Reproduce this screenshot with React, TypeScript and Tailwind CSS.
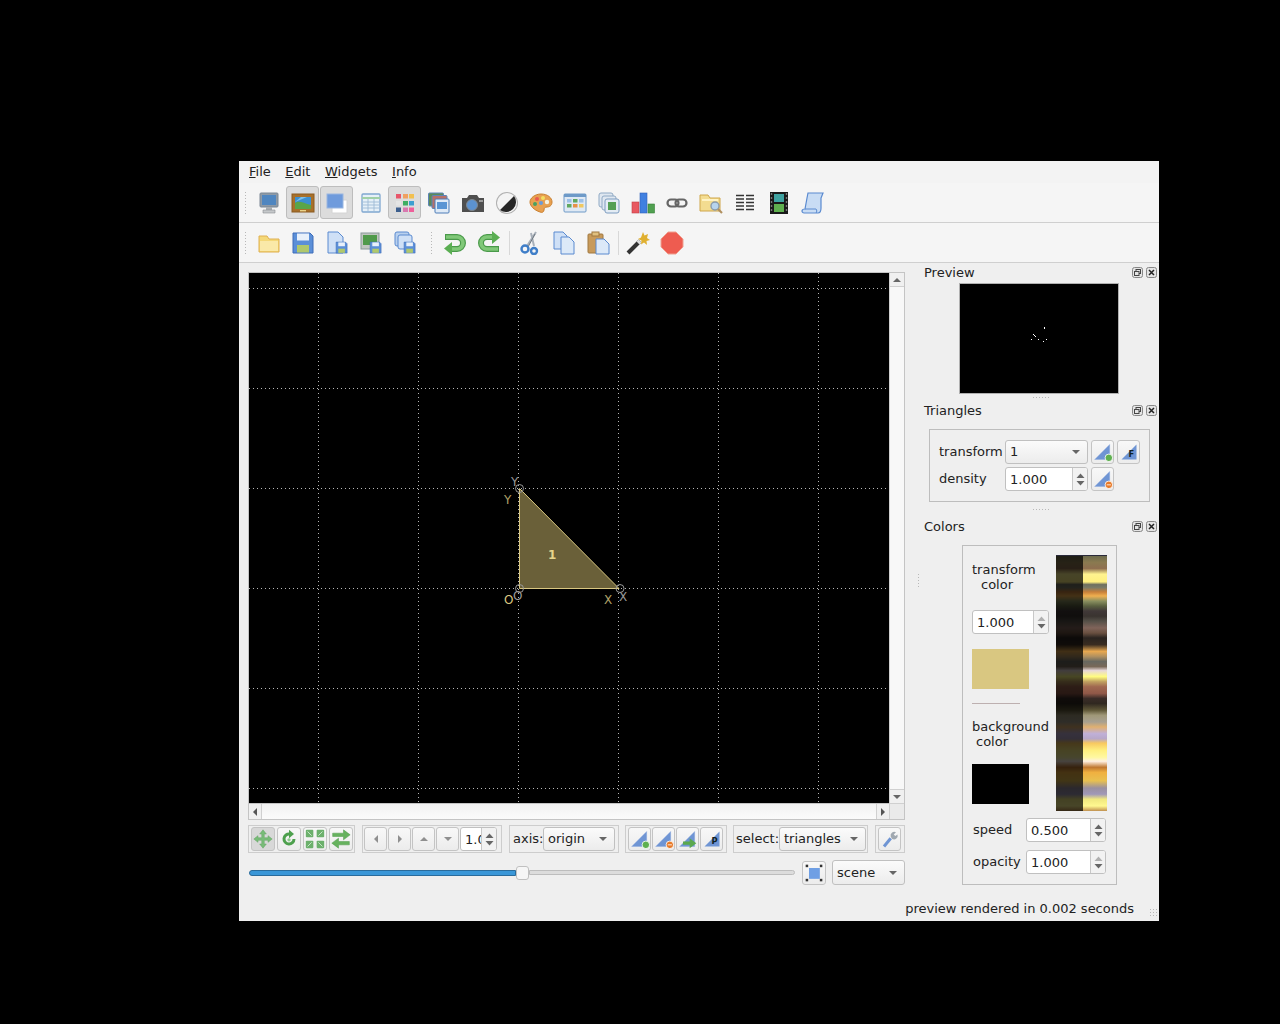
import React from "react";

type P = { children: React.ReactNode };
const Ic = ({ children, s = 24 }: P & { s?: number }) => (
  <svg width={s} height={s} viewBox="0 0 24 24" className="block shrink-0">{children}</svg>
);

const Monitor = () => <Ic><rect x="3" y="2" width="18" height="14" rx="1" fill="#8e9aa6" stroke="#7b8794" /><rect x="5" y="4" width="14" height="10" fill="#4f86c0" /><path d="M9 16h6v3H9z" fill="#a9aeb2" /><path d="M6 19h12v3H6z" fill="#c5c8ca" stroke="#8a8e92" strokeWidth=".6" /></Ic>;
const Pic = () => <Ic><rect x="1" y="3" width="22" height="18" fill="#a8702a" stroke="#8a5a20" /><rect x="4" y="6" width="16" height="12" fill="#3c8fd0" /><path d="M4 18v-6c4-3 8 0 16 2v4z" fill="#5aa548" /><path d="M4 11l6-5h6z" fill="#7ec0e8" /><rect x="9" y="19" width="6" height="1.4" fill="#e9d38a" /></Ic>;
const Shadow = () => <Ic><path d="M7 9h15v13H7z" fill="#fff" stroke="#d4d4d4" /><rect x="2" y="3" width="16" height="14" fill="#6f9bdc" stroke="#9ab6e0" /></Ic>;
const Table = () => <Ic><rect x="3" y="3" width="18" height="18" rx="1" fill="#e6f0f8" stroke="#7fa6cf" strokeWidth="1.3" /><path d="M3 7h18" stroke="#a0d0a8" strokeWidth="2" /><path d="M4 11h16M4 14h16M4 17h16M9 8v12M15 8v12" stroke="#9dbad6" strokeWidth=".9" /></Ic>;
const Colors = () => <Ic><rect x="3" y="3" width="5" height="4.5" fill="#e8566a" /><rect x="10" y="3" width="5" height="4.5" fill="#f0a060" /><rect x="16" y="3" width="5" height="4.5" fill="#f2c050" /><rect x="3" y="10" width="5" height="4.5" fill="#e4e4e4" /><rect x="10" y="10" width="5" height="4.5" fill="#3cae62" /><rect x="16" y="10" width="5" height="4.5" fill="#3a9fd0" /><rect x="3" y="16.5" width="5" height="4.5" fill="#3d5f8e" /><rect x="10" y="16.5" width="5" height="4.5" fill="#d878b0" /><rect x="16" y="16.5" width="5" height="4.5" fill="#ee5f9a" /></Ic>;
const Layers = () => <Ic><rect x="1.5" y="2" width="15" height="13" rx="1" fill="#5b8a58" stroke="#5c84b8" /><rect x="5" y="4.5" width="15" height="13" rx="1" fill="#b87068" stroke="#5c84b8" /><rect x="8" y="8" width="14" height="14" rx="1" fill="#dfeaf6" stroke="#4d7cb8" /><rect x="10" y="11" width="10" height="7" fill="#5a95d4" /></Ic>;
const Camera = () => <Ic><path d="M1 7h5l2-3h8l2 3h5v14H1z" fill="#4f4f4f" /><circle cx="11" cy="14" r="5.5" fill="#5c92d0" stroke="#80878e" /><rect x="18" y="9" width="4" height="2" fill="#9a9a9a" /></Ic>;
const Contrast = () => <Ic><circle cx="12" cy="12" r="11" fill="#b0b0b0" /><circle cx="12" cy="12" r="10" fill="#f4f4f4" /><path d="M19 5a10 10 0 0 1-14 14z" fill="#262626" /></Ic>;
const Palette = () => <Ic><path d="M12 3c7 0 11 4 11 8s-3 5-5 5-3 1-3 3-2 3-4 2C5 19 1 15 1 11s5-8 11-8z" fill="#e8a050" stroke="#c98030" /><circle cx="8" cy="8" r="2" fill="#e85a50" /><circle cx="14" cy="7" r="2" fill="#f2de60" /><circle cx="6" cy="13" r="2" fill="#4aa060" /><circle cx="18" cy="11" r="2.2" fill="#f4f0e0" /><circle cx="12" cy="12" r="2" fill="#6a9ad8" /></Ic>;
const Grid2 = () => <Ic><rect x="1" y="3" width="22" height="18" rx="1" fill="#dfe9f4" stroke="#6e9ac8" /><rect x="1" y="3" width="22" height="3" fill="#6e9ac8" /><rect x="4" y="8" width="4.5" height="3.5" fill="#9cc0e8" /><rect x="10" y="8" width="4.5" height="3.5" fill="#60a860" /><rect x="16" y="8" width="4.5" height="3.5" fill="#9cc0e8" /><rect x="4" y="13" width="4.5" height="3.5" fill="#60a860" /><rect x="10" y="13" width="4.5" height="3.5" fill="#e89048" /><rect x="16" y="13" width="4.5" height="3.5" fill="#f0c860" /></Ic>;
const Stack = () => <Ic><rect x="2" y="2" width="14" height="14" rx="2" fill="#dfe7f0" stroke="#8fa9c4" /><rect x="5" y="5" width="14" height="14" rx="2" fill="#dfe7f0" stroke="#8fa9c4" /><rect x="8" y="8" width="14" height="14" rx="2" fill="#e4ecf4" stroke="#7d9cc0" /><rect x="11" y="11" width="8" height="8" fill="#55a055" /></Ic>;
const Bars = () => <Ic><rect x="1" y="11" width="7" height="11" fill="#e85860" stroke="#c04048" strokeWidth=".6" /><rect x="9" y="2" width="7" height="20" fill="#4080e0" stroke="#3060b8" strokeWidth=".6" /><rect x="17" y="13" width="6.5" height="9" fill="#50a050" stroke="#388038" strokeWidth=".6" /></Ic>;
const Chain = () => <Ic><rect x="2.500" y="8.500" width="11" height="7" rx="3.500" fill="none" stroke="#666" strokeWidth="2.200" /><rect x="10.500" y="8.500" width="11" height="7" rx="3.500" fill="none" stroke="#666" strokeWidth="2.200" /></Ic>;
const FolderFind = () => <Ic><path d="M1 4h8l2 3h10v13H1z" fill="#f3dc90" stroke="#cfa64a" /><path d="M3 9h16" stroke="#fff3c4" strokeWidth="2" /><circle cx="16" cy="15" r="4" fill="#b7d4ee" stroke="#8a9bab" strokeWidth="1.4" /><path d="M19 18l4 4" stroke="#b09060" strokeWidth="2.2" /></Ic>;
const Columns = () => <Ic><path d="M3 4.500h8M3 8h8M3 11.500h8M3 15h8M3 18.500h8M13 4.500h8M13 8h8M13 11.500h8M13 15h8M13 18.500h8" stroke="#333" strokeWidth="1.700" /></Ic>;
const Film = () => <Ic><rect x="3" y="1" width="18" height="22" fill="#1a1a1a" /><rect x="7" y="3" width="10" height="8" fill="#3fa2a0" /><rect x="7" y="13" width="10" height="8" fill="#5fb04f" /><path d="M4.5 2v20M19.5 2v20" stroke="#777" strokeWidth="1.4" strokeDasharray="2 2" /></Ic>;
const Scroll = () => <Ic><path d="M7 2h15l-2 5v10c0 3-1 5-3 5H3c-1 0-2-1-2-2s1-2 3-2l2-11z" fill="#c8dcf4" stroke="#5a8ad0" strokeWidth="1.2" /><path d="M4 18h11c1 1 1 3 0 4" fill="none" stroke="#5a8ad0" /></Ic>;

const Folder = () => <Ic><path d="M2 5h8l2 3h10v13H2z" fill="#f4d878" stroke="#dfb050" /><path d="M3 10h18v10H3z" fill="#fae9a8" /></Ic>;
const Floppy = () => <><path d="M2 2h17l3 3v17H2z" fill="#5b8fd8" stroke="#3f6db8" /><rect x="6" y="2.5" width="12" height="7" fill="#e8f0fa" /><rect x="6" y="14" width="12" height="7.5" fill="#b0c86c" /></>;
const Save = () => <Ic><Floppy /></Ic>;
const SmallFloppy = () => <g transform="translate(10 10) scale(.55)"><Floppy /></g>;
const SaveDoc = () => <Ic><path d="M3 1h10l5 5v16H3z" fill="#cfe0f6" stroke="#5a8ad0" /><SmallFloppy /></Ic>;
const SaveImg = () => <Ic><rect x="2" y="2" width="18" height="16" fill="#c0c6c0" stroke="#8a9a9a" /><rect x="4" y="4" width="14" height="10" fill="#4f9a4a" /><SmallFloppy /></Ic>;
const SaveAll = () => <Ic><rect x="2" y="1" width="14" height="14" rx="2" fill="#b8d0ee" stroke="#5a8ad0" /><rect x="5" y="4" width="14" height="14" rx="2" fill="#cfe0f6" stroke="#5a8ad0" /><SmallFloppy /></Ic>;
const Undo = () => <Ic><path d="M2 6h12a6 6 0 0 1 0 12H8" fill="none" stroke="#4a9a4a" strokeWidth="6" /><path d="M3 6h11a6 6 0 0 1 0 12H8" fill="none" stroke="#80c878" strokeWidth="3.600" /><path d="M9 11v13l-8-6.500z" fill="#5aae52" /></Ic>;
const Redo = () => <Ic><path d="M22 18H10a6 6 0 0 1 0-12h6" fill="none" stroke="#4a9a4a" strokeWidth="6" /><path d="M21 18H10a6 6 0 0 1 0-12h6" fill="none" stroke="#80c878" strokeWidth="3.600" /><path d="M15 0v13l8-6.500z" fill="#5aae52" /></Ic>;
const Cut = () => <Ic><path d="M18 1L9 15M13 2l3 13" stroke="#a9b1ba" strokeWidth="2" /><path d="M17 3l-7 13" stroke="#6d7780" strokeWidth="1" /><circle cx="7" cy="18" r="3.5" fill="none" stroke="#3f7ec8" strokeWidth="2.4" /><circle cx="16" cy="20" r="3" fill="none" stroke="#3f7ec8" strokeWidth="2.4" /></Ic>;
const Copy = () => <Ic><path d="M2 1h9l4 4v13H2z" fill="#cfe0f6" stroke="#5a8ad0" /><path d="M9 6h8l5 5v12H9z" fill="#dce9f8" stroke="#5a8ad0" /></Ic>;
const Paste = () => <Ic><rect x="2" y="3" width="15" height="19" rx="1" fill="#c89a5a" stroke="#a07840" /><rect x="6" y="1" width="7" height="4" fill="#e0c080" stroke="#a07840" /><path d="M10 8h8l5 5v10H10z" fill="#dce9f8" stroke="#5a8ad0" /></Ic>;
const Wand = () => <Ic><path d="M2 22L14 10" stroke="#333" strokeWidth="4" /><path d="M12 12l2-2" stroke="#ddd" strokeWidth="4" /><path d="M17 1l1.5 3.5L22 3l-1 4 3 2-3.5 1 .5 4-3-2.5-3 2 .5-4L12 8l3-1.5z" fill="#e0b030" /></Ic>;
const Stop = () => <Ic><path d="M8 1h8l7 7v8l-7 7H8l-7-7V8z" fill="#ee5c50" stroke="#f0a090" /></Ic>;

const Move = () => <Ic s={20}><path d="M12 1l4 5h-2.500v4.500H18V8l5 4-5 4v-2.500h-4.500V18H16l-4 5-4-5h2.500v-4.500H6V16l-5-4 5-4v2.500h4.500V6H8z" fill="#78bc78" stroke="#62a462" strokeWidth=".6" /></Ic>;
const Rotate = () => <Ic s={20}><path d="M18 12a6 6 0 1 1-5-6" fill="none" stroke="#4da04d" strokeWidth="3.600" /><path d="M12 1v10l6-5z" fill="#4da04d" /><circle cx="12" cy="13" r="2" fill="#8fcc8f" /></Ic>;
const Four = () => <Ic s={20}><rect x="1" y="1" width="9" height="9" rx="1" fill="#6cb06c" /><rect x="14" y="1" width="9" height="9" rx="1" fill="#6cb06c" /><rect x="1" y="14" width="9" height="9" rx="1" fill="#6cb06c" /><rect x="14" y="14" width="9" height="9" rx="1" fill="#6cb06c" /><path d="M3 3l5 5M21 3l-5 5M3 21l5-5M21 21l-5-5" stroke="#c6e6c6" strokeWidth="1.200" /></Ic>;
const Swap = () => <Ic s={20}><path d="M2 5h13V1l8 6-8 6V9H2z" fill="#66b25e" stroke="#4f9a4a" strokeWidth=".6" /><path d="M22 15H9v-4l-8 6 8 6v-4h13z" fill="#66b25e" stroke="#4f9a4a" strokeWidth=".6" /></Ic>;
const Tri = ({ d, f = "#8f8f8f" }: { d: string; f?: string }) => <svg width="10" height="10" viewBox="0 0 10 10" className="block"><path d={d} fill={f} /></svg>;

const TriBase = () => <path d="M2 21L20 3v18z" fill="#6f95d4" stroke="#8aa8dc" strokeWidth=".5" />;
const TriAdd = () => <Ic s={20}><TriBase /><circle cx="19" cy="19" r="4.500" fill="#5fb050" stroke="#fff" /></Ic>;
const TriDel = () => <Ic s={20}><TriBase /><circle cx="19" cy="19" r="4.500" fill="#e87a28" stroke="#fff" /><path d="M16.500 19h5" stroke="#fff" /></Ic>;
const TriArrow = () => <Ic s={20}><TriBase /><path d="M6 15h8v-4l8 6-8 6v-4H6z" fill="#5aa84e" /></Ic>;
const TriF = ({ t }: { t: string }) => <Ic s={20}><path d="M3 21L21 3v18z" fill="#6f95d4" /><text x="11.500" y="18" fontSize="10" fontWeight="700" fill="#122" fontFamily="DejaVu Sans">{t}</text></Ic>;
const Wrench = () => <Ic s={18}><path d="M4 22l9-11" stroke="#6f95d4" strokeWidth="4" /><path d="M13 9a5 5 0 0 1 7-6l-3 3 2 2 3-2a5 5 0 0 1-7 6z" fill="#a0a8b0" /></Ic>;
const Fit = () => <Ic s={20}><rect x="6" y="6" width="13" height="13" fill="#6f9fe4" /><rect x="2" y="2" width="3" height="3" fill="#333" /><rect x="19" y="2" width="3" height="3" fill="#333" /><rect x="2" y="19" width="3" height="3" fill="#333" /><rect x="19" y="19" width="3" height="3" fill="#333" /></Ic>;

const TB = ({ on, children }: P & { on?: boolean }) => (
  <div className={"w-[33px] h-[33px] mr-px flex items-center justify-center rounded-[3px] border " + (on ? "bg-[#dcdcdc] border-[#bdbdbd]" : "border-transparent")}>{children}</div>
);
const Handle = ({ cls }: { cls: string }) => (
  <div className={"bg-[radial-gradient(#b8b8b8_0.7px,transparent_0.8px)] bg-[length:3px_3px] " + cls} />
);
const Sep = ({ cls }: { cls: string }) => <div className={"w-px h-[24px] bg-[#d8d8d8] " + cls} />;

const Btn = ({ children, on, w = "w-[23px]" }: P & { on?: boolean; w?: string }) => (
  <div className={w + " h-[24px] shrink-0 flex items-center justify-center rounded-[3px] border border-[#c4c4c4] " + (on ? "bg-[#d8d8d8]" : "bg-gradient-to-b from-[#f8f8f8] to-[#ececec]")}>{children}</div>
);
const Caret = () => <svg width="10" height="6" viewBox="0 0 10 6" className="block shrink-0"><path d="M1 1h8L5 5z" fill="#666" /></svg>;
const Combo = ({ t, cls }: { t: string; cls: string }) => (
  <div className={"h-[24px] shrink-0 flex items-center justify-between pl-[4px] pr-[6px] rounded-[3px] border border-[#c0c0c0] bg-gradient-to-b from-[#fbfbfb] to-[#ececec] " + cls}>
    <span>{t}</span><Caret />
  </div>
);
const Spin = ({ t, cls, upDim }: { t: string; cls: string; upDim?: boolean }) => (
  <div className={"h-[24px] shrink-0 flex rounded-[3px] border border-[#c0c0c0] bg-white overflow-hidden " + cls}>
    <div className="flex-1 min-w-0 overflow-hidden pl-[4px] leading-[24px]">{t}</div>
    <div className="w-[15px] shrink-0 border-l border-[#c8c8c8] bg-[#f2f2f2] flex flex-col items-center justify-center gap-[3px]">
      <svg width="9" height="5" viewBox="0 0 9 5" className="block"><path d="M0.500 5L4.500 0.500 8.500 5z" fill={upDim ? "#b0b0b0" : "#666"} /></svg>
      <svg width="9" height="5" viewBox="0 0 9 5" className="block"><path d="M0.500 0L4.500 4.500 8.500 0z" fill="#666" /></svg>
    </div>
  </div>
);
const Group = ({ children, cls }: P & { cls: string }) => (
  <div className={"h-[28px] shrink-0 flex items-center border border-[#cdcdcd] " + cls}>{children}</div>
);

const DockBtns = () => (
  <div className="flex gap-[3px] mr-[2px]">
    <svg width="11" height="11" viewBox="0 0 11 11" className="block"><rect x=".5" y=".5" width="10" height="10" rx="2" fill="#e4e4e4" stroke="#888" /><rect x="4" y="2.500" width="4.500" height="4" fill="none" stroke="#444" /><rect x="2.500" y="4.500" width="4.500" height="4" fill="#e4e4e4" stroke="#444" /></svg>
    <svg width="11" height="11" viewBox="0 0 11 11" className="block"><rect x=".5" y=".5" width="10" height="10" rx="2" fill="#e4e4e4" stroke="#888" /><path d="M3 3l5 5M8 3l-5 5" stroke="#222" strokeWidth="1.500" /></svg>
  </div>
);
const DockTitle = ({ t }: { t: string }) => (
  <div className="h-[18px] shrink-0 flex items-center justify-between"><span className="mt-[2px]">{t}</span><DockBtns /></div>
);

const stops: [number, string][] = [[20,"#6b6a4c"],[40,"#8a7a50"],[58,"#8f6f50"],[75,"#fff38f"],[98,"#fff080"],[106,"#6f7060"],[115,"#7a7a66"],[128,"#c8803a"],[140,"#f0b050"],[155,"#8a9060"],[170,"#5a6040"],[185,"#403838"],[200,"#3a3430"],[215,"#555048"],[235,"#80645a"],[250,"#6a5040"],[265,"#2a2420"],[285,"#3a2c20"],[305,"#e8a850"],[320,"#b09060"],[335,"#686860"],[350,"#786858"],[362,"#e8d8d8"],[380,"#fffc80"],[395,"#c0a060"],[410,"#a06850"],[430,"#905848"],[445,"#3a2c28"],[460,"#302820"],[480,"#605838"],[495,"#a09878"],[515,"#a8a090"],[530,"#e0b070"],[550,"#c0b0d8"],[565,"#b8a8c8"],[578,"#f8c860"],[600,"#fff080"],[620,"#fff8a0"],[632,"#fff0e0"],[650,"#c07830"],[665,"#f0b040"],[690,"#e8c050"],[712,"#9a90a0"],[730,"#a098b8"],[745,"#f0e880"],[765,"#fff890"],[780,"#c09050"]];

const Palette2 = () => (
  <svg width="51" height="256" viewBox="0 0 51 256" className="block shrink-0">
    <defs>
      <linearGradient id="pal" x1="0" y1="0" x2="0" y2="1">
        {stops.map(([y, c]) => <stop key={y} offset={(y - 18) / 762} stopColor={c} />)}
      </linearGradient>
    </defs>
    <rect width="51" height="256" fill="url(#pal)" />
    <rect width="27" height="256" fill="#000" opacity=".72" />
    <rect width="51" height="1" fill="#2a2a3a" />
  </svg>
);

const Canvas = () => {
  const xs = [69, 169, 269, 369, 469, 569];
  const ys = [15, 115, 215, 315, 415, 515];
  const tx = { fontFamily: "DejaVu Sans", fontSize: 12 };
  return (
    <svg width="640" height="530" viewBox="0 0 640 530" className="block shrink-0 bg-black">
      {xs.map(x => <line key={x} x1={x + .5} x2={x + .5} y1="0" y2="530" stroke="#b8b8b8" strokeDasharray="1 3" />)}
      {ys.map(y => <line key={y} y1={y + .5} y2={y + .5} x1="0" x2="640" stroke="#b8b8b8" strokeDasharray="1 3" />)}
      <path d="M270.500 215.500V315.500H370z" fill="#6a6039" stroke="#d9c781" />
      <circle cx="270.500" cy="215.500" r="4" fill="none" stroke="#999" />
      <circle cx="270.500" cy="315.500" r="4" fill="none" stroke="#999" />
      <circle cx="371" cy="315.500" r="4" fill="none" stroke="#999" />
      <text x="262" y="213" fill="#999" {...tx}>Y</text>
      <text x="255" y="231" fill="#b0a068" {...tx}>Y</text>
      <text x="255" y="331" fill="#d9c781" {...tx}>O</text>
      <text x="264" y="327" fill="#999" {...tx}>O</text>
      <text x="355" y="331" fill="#b0a068" {...tx}>X</text>
      <text x="370" y="328" fill="#999" {...tx}>X</text>
      <text x="299" y="286" fill="#e6d48c" fontFamily="DejaVu Sans" fontSize="12" fontWeight="700">1</text>
    </svg>
  );
};

export default function App() {
  return (
    <div className="min-h-screen bg-black pt-[161px] pl-[239px] [font-family:'DejaVu_Sans',sans-serif] text-[13px] text-[#222]">
      <div className="w-[920px] h-[760px] flex flex-col bg-[#efefef]">
        <div className="h-[22px] flex items-center gap-[0.5px] pl-[3px] bg-[#f3f3f3] shrink-0">
          {[["F", "ile"], ["E", "dit"], ["W", "idgets"], ["I", "nfo"]].map(([a, b]) => (
            <span key={a} className="px-[7px]"><span className="underline">{a}</span>{b}</span>
          ))}
        </div>
        <div className="h-[40px] shrink-0 flex items-center pl-[5px] bg-[#f5f5f5] border-b border-[#cfcfcf]">
          <Handle cls="w-[4px] h-[24px] mr-[4px]" />
          <TB><Monitor /></TB><TB on><Pic /></TB><TB on><Shadow /></TB><TB><Table /></TB><TB on><Colors /></TB><TB><Layers /></TB><TB><Camera /></TB><TB><Contrast /></TB><TB><Palette /></TB><TB><Grid2 /></TB><TB><Stack /></TB><TB><Bars /></TB><TB><Chain /></TB><TB><FolderFind /></TB><TB><Columns /></TB><TB><Film /></TB><TB><Scroll /></TB>
        </div>
        <div className="h-[40px] shrink-0 flex items-center pl-[5px] bg-[#f5f5f5] border-b border-[#cfcfcf]">
          <Handle cls="w-[4px] h-[24px] mr-[4px]" />
          <TB><Folder /></TB><TB><Save /></TB><TB><SaveDoc /></TB><TB><SaveImg /></TB><TB><SaveAll /></TB>
          <Handle cls="w-[4px] h-[24px] ml-[8px] mr-[4px]" />
          <TB><Undo /></TB><TB><Redo /></TB>
          <Sep cls="ml-[3px] mr-[3px]" />
          <TB><Cut /></TB><TB><Copy /></TB><TB><Paste /></TB>
          <Sep cls="ml-[3px] mr-[2px]" />
          <TB><Wand /></TB><TB><Stop /></TB>
        </div>

        <div className="flex-1 min-h-0 flex">
          <div className="w-[666px] shrink-0 pl-[9px] pt-[9px] flex flex-col">
            <div className="w-[657px] h-[548px] shrink-0 border border-[#c4c4c4] flex flex-col">
              <div className="flex h-[530px] shrink-0">
                <Canvas />
                <div className="flex-1 flex flex-col bg-[#f8f8f8] border-l border-[#d0d0d0]">
                  <div className="h-[14px] flex items-center justify-center bg-[#f0f0f0] border-b border-[#d0d0d0]"><Tri d="M1 7h8L5 3z" f="#666" /></div>
                  <div className="flex-1" />
                  <div className="h-[14px] flex items-center justify-center bg-[#f0f0f0] border-t border-[#d0d0d0]"><Tri d="M1 3h8L5 7z" f="#666" /></div>
                </div>
              </div>
              <div className="flex-1 flex">
                <div className="w-[640px] flex items-center bg-gradient-to-b from-[#f2f2f2] to-[#fbfbfb] border-t border-[#c4c4c4]">
                  <div className="w-[13px] h-full flex items-center justify-center bg-[#f0f0f0] border-r border-[#d0d0d0]"><Tri d="M7 1v8L3 5z" f="#555" /></div>
                  <div className="flex-1" />
                  <div className="w-[13px] h-full flex items-center justify-center bg-[#f0f0f0] border-l border-[#d0d0d0]"><Tri d="M3 1v8l4-4z" f="#555" /></div>
                </div>
                <div className="flex-1 bg-[#eaeaea] border-l border-t border-[#d0d0d0]" />
              </div>
            </div>

            <div className="w-[657px] mt-[5px] flex">
              <Group cls="w-[107px] gap-[2px] px-[2px]">
                <Btn on w="w-[24px]"><Move /></Btn><Btn w="w-[24px]"><Rotate /></Btn><Btn w="w-[24px]"><Four /></Btn><Btn w="w-[24px]"><Swap /></Btn>
              </Group>
              <Group cls="w-[140px] ml-[7px] gap-px pl-px">
                <Btn><Tri d="M7 1v8L3 5z" /></Btn><Btn><Tri d="M3 1v8l4-4z" /></Btn><Btn><Tri d="M1 7h8L5 3z" /></Btn><Btn><Tri d="M1 3h8L5 7z" /></Btn>
                <Spin t="1.0" cls="w-[37px]" />
              </Group>
              <Group cls="w-[110px] ml-[7px] pl-[3px]">
                <span className="w-[30px] shrink-0">axis:</span><Combo t="origin" cls="w-[72px]" />
              </Group>
              <Group cls="w-[102px] ml-[6px] gap-px pl-[2px]">
                <Btn><TriAdd /></Btn><Btn><TriDel /></Btn><Btn><TriArrow /></Btn><Btn><TriF t="P" /></Btn>
              </Group>
              <Group cls="w-[135px] ml-[6px] pl-[2px]">
                <span className="w-[43px] shrink-0">select:</span><Combo t="triangles" cls="w-[87px]" />
              </Group>
              <Group cls="w-[30px] ml-[7px] pl-[2px]">
                <Btn><Wrench /></Btn>
              </Group>
            </div>

            <div className="w-[657px] h-[25px] mt-[7px] flex items-center">
              <div className="w-[546px] ml-px flex items-center">
                <div className="w-[267px] h-[6px] rounded-l-[3px] bg-[#3a97d8] border border-[#2a6c9c]" />
                <div className="w-[13px] h-[14px] shrink-0 rounded-[3px] bg-[#f6f6f6] border border-[#c0c0c0]" />
                <div className="flex-1 h-[5px] rounded-r-[3px] bg-[#dcdcdc] border border-[#bdbdbd]" />
              </div>
              <div className="ml-[7px]"><Btn w="w-[24px]"><Fit /></Btn></div>
              <Combo t="scene" cls="w-[73px] ml-[6px] h-[25px]" />
            </div>
          </div>

          <div className="w-[19px] shrink-0 flex items-center">
            <Handle cls="w-[3px] h-[15px] ml-[12px]" />
          </div>

          <div className="flex-1 min-w-0 flex flex-col">
            <DockTitle t="Preview" />
            <div className="w-[160px] h-[111px] ml-[35px] mt-[2px] shrink-0 bg-black border border-[#b0b0b0]">
              <svg width="158" height="109" viewBox="0 0 158 109" className="block">
                {[[84, 43], [84, 44], [73, 50], [75, 52], [71, 55], [78, 55], [83, 57], [86, 55], [74, 51]].map(([x, y]) => <rect key={x + "-" + y} x={x} y={y} width="1" height="1" fill="#fff" />)}
              </svg>
            </div>
            <div className="h-[7px] shrink-0 flex items-center justify-center pr-[2px]"><Handle cls="w-[18px] h-[3px]" /></div>
            <DockTitle t="Triangles" />
            <div className="w-[221px] h-[73px] ml-[5px] mt-[10px] shrink-0 border border-[#bdbdbd] pt-[10px] pl-[9px]">
              <div className="flex items-center">
                <span className="w-[66px] shrink-0">transform</span>
                <Combo t="1" cls="w-[83px]" />
                <div className="ml-[3px]"><Btn><TriAdd /></Btn></div>
                <div className="ml-[3px]"><Btn><TriF t="F" /></Btn></div>
              </div>
              <div className="flex items-center mt-[3px]">
                <span className="w-[66px] shrink-0">density</span>
                <Spin t="1.000" cls="w-[83px]" />
                <div className="ml-[3px]"><Btn><TriDel /></Btn></div>
              </div>
            </div>
            <div className="h-[15px] shrink-0 flex items-center justify-center pr-[2px]"><Handle cls="w-[18px] h-[3px]" /></div>
            <DockTitle t="Colors" />
            <div className="w-[155px] h-[340px] ml-[38px] mt-[10px] shrink-0 border border-[#bdbdbd] pt-[9px] pl-[9px]">
              <div className="flex">
                <div className="w-[84px] shrink-0 flex flex-col">
                  <div className="mt-[7px] leading-[15px]">transform<div className="pl-[9px]">color</div></div>
                  <Spin t="1.000" cls="w-[77px] mt-[18px]" upDim />
                  <div className="w-[57px] h-[40px] mt-[15px] bg-[#d9c781]" />
                  <div className="w-[48px] h-px mt-[14px] bg-[#bdb0b0]" />
                  <div className="mt-[15px] leading-[15px] whitespace-nowrap">background<div className="pl-[4px]">color</div></div>
                  <div className="w-[57px] h-[40px] mt-[15px] bg-black" />
                </div>
                <Palette2 />
              </div>
              <div className="flex items-center mt-[7px] pl-px">
                <span className="w-[53px] shrink-0">speed</span>
                <Spin t="0.500" cls="w-[80px]" />
              </div>
              <div className="flex items-center mt-[8px] pl-px">
                <span className="w-[53px] shrink-0">opacity</span>
                <Spin t="1.000" cls="w-[80px]" upDim />
              </div>
            </div>
          </div>
        </div>

        <div className="h-[24px] shrink-0 flex items-center justify-end">
          <span>preview rendered in 0.002 seconds</span>
          <Handle cls="w-[10px] h-[10px] ml-[15px] mt-[8px]" />
        </div>
      </div>
    </div>
  );
}
